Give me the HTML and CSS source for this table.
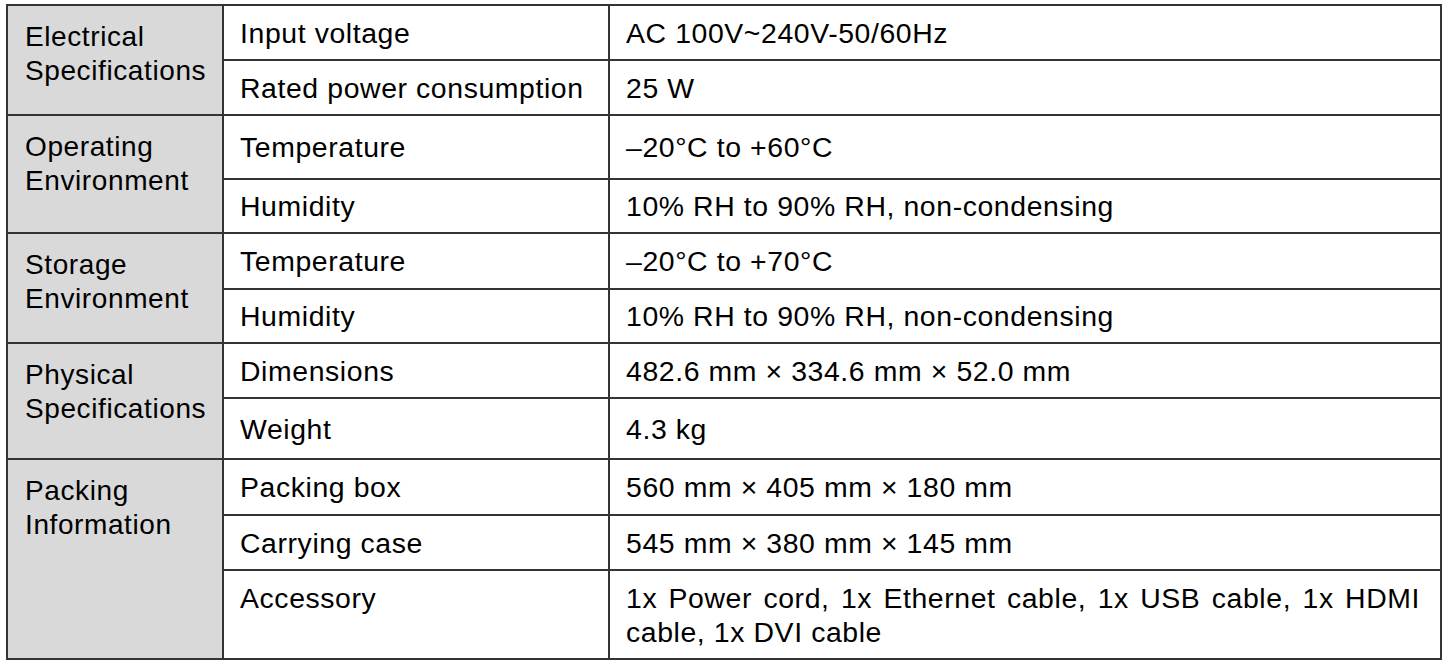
FILE: index.html
```html
<!DOCTYPE html>
<html>
<head>
<meta charset="utf-8">
<link rel="stylesheet" href="styles.css">
</head>
<body>
<div class="spec">
  <div class="head g1">Electrical<br>Specifications</div>
  <div class="cell">Input voltage</div>
  <div class="cell">AC 100V~240V-50/60Hz</div>
  <div class="cell">Rated power consumption</div>
  <div class="cell">25 W</div>

  <div class="head g2">Operating<br>Environment</div>
  <div class="cell">Temperature</div>
  <div class="cell">–20°C to +60°C</div>
  <div class="cell">Humidity</div>
  <div class="cell">10% RH to 90% RH, non-condensing</div>

  <div class="head g2">Storage<br>Environment</div>
  <div class="cell">Temperature</div>
  <div class="cell">–20°C to +70°C</div>
  <div class="cell">Humidity</div>
  <div class="cell">10% RH to 90% RH, non-condensing</div>

  <div class="head g2">Physical<br>Specifications</div>
  <div class="cell">Dimensions</div>
  <div class="cell">482.6 mm × 334.6 mm × 52.0 mm</div>
  <div class="cell">Weight</div>
  <div class="cell">4.3 kg</div>

  <div class="head g3">Packing<br>Information</div>
  <div class="cell">Packing box</div>
  <div class="cell">560 mm × 405 mm × 180 mm</div>
  <div class="cell">Carrying case</div>
  <div class="cell">545 mm × 380 mm × 145 mm</div>
  <div class="cell top">Accessory</div>
  <div class="cell top just">1x Power cord, 1x Ethernet cable, 1x USB cable, 1x HDMI cable, 1x DVI cable</div>
</div>
</body>
</html>
```

FILE: styles.css
```css
html, body {
  margin: 0;
  padding: 0;
  background: #ffffff;
}

body {
  font-family: "Liberation Sans", Arial, sans-serif;
  font-size: 28px;
  letter-spacing: 0.6px;
  line-height: 34px;
  color: #000000;
}

.spec {
  display: grid;
  grid-template-columns: 214px 384px 830px;
  grid-template-rows: 53px 53px 62px 52px 54px 52px 53px 59px 54px 53px 87px;
  gap: 2px;
  padding: 2px;
  width: 1432px;
  margin: 4px 0 0 6px;
  background: #343434;
}

.head {
  grid-column: 1;
  background: #d9d9d9;
  padding: 14px 10px 0 17px;
}

.g1, .g2 { grid-row: span 2; }
.g3 { grid-row: span 3; }

.cell {
  background: #ffffff;
  display: flex;
  align-items: center;
  padding: 0 20px 0 16px;
  font-size: 28.4px;
}

.cell.top {
  display: block;
  padding-top: 10px;
}

.just {
  text-align: justify;
}
```
